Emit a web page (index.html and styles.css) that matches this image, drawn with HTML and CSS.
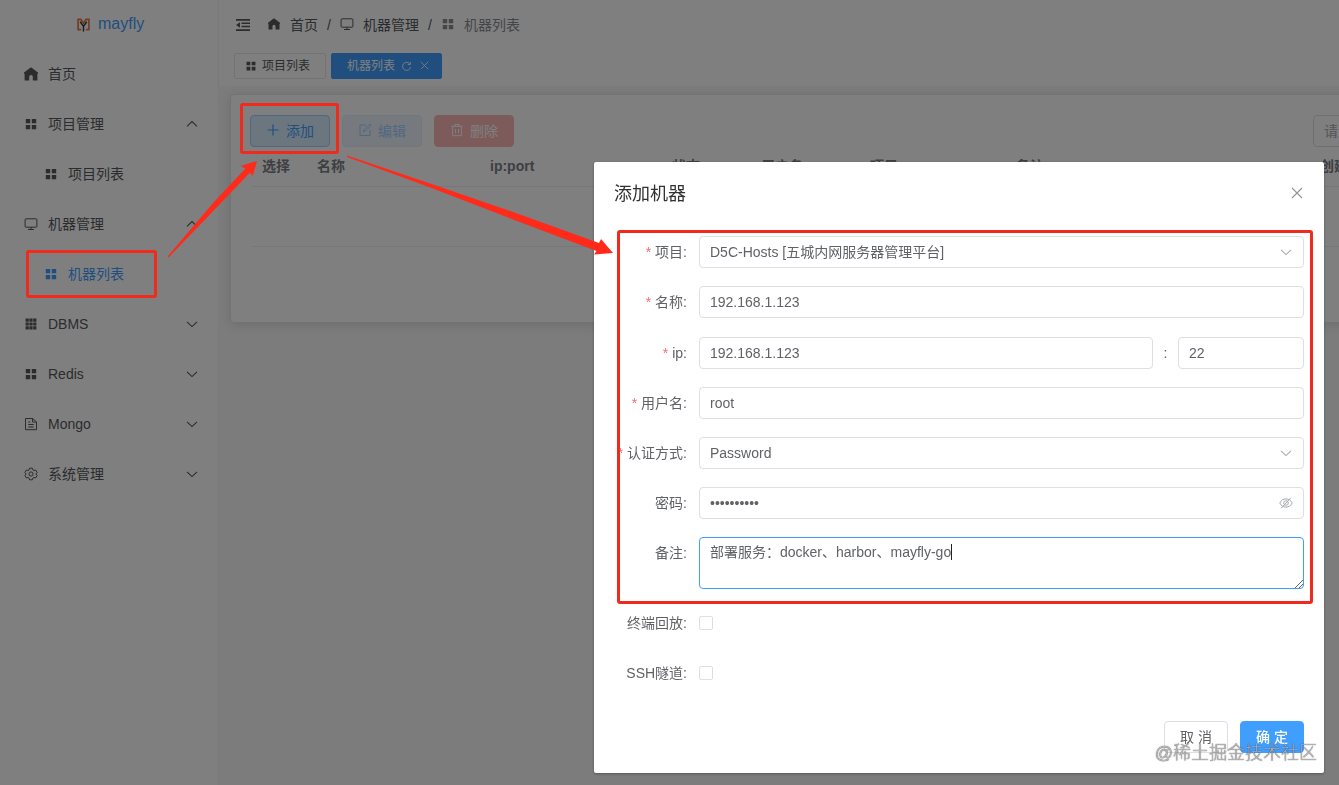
FILE: index.html
```html
<!DOCTYPE html>
<html lang="zh-CN">
<head>
    <meta charset="UTF-8">
    <meta name="viewport" content="width=device-width, initial-scale=1.0">
    <title>mayfly</title>
    <link rel="stylesheet" href="styles.css">
</head>
<body>
    <svg class="sprite">
        <symbol id="i-home" viewBox="0 0 14 14"><path fill="currentColor" d="M7 .3 0 5.600v1.200h.6v6.700h4.600V9.800a1.800 1.800 0 0 1 3.600 0v3.700h4.600V6.800h.6V5.600z"/></symbol>
        <symbol id="i-menu" viewBox="0 0 14 14"><path fill="currentColor" d="M1.800 2h4.400v4.200H1.800zM7.800 2h4.400v4.200H7.800zM1.800 8h4.400v4.200H1.800zM7.800 8h4.400v4.200H7.800z"/></symbol>
        <symbol id="i-grid" viewBox="0 0 14 14"><path fill="currentColor" d="M1.600 1.600h3.200v3.200H1.600zM5.400 1.600h3.200v3.200H5.400zM9.200 1.600h3.200v3.200H9.200zM1.600 5.400h3.200v3.200H1.600zM5.400 5.400h3.200v3.200H5.400zM9.200 5.400h3.200v3.200H9.200zM1.600 9.200h3.200v3.200H1.600zM5.400 9.200h3.200v3.200H5.400zM9.200 9.200h3.200v3.200H9.200z"/></symbol>
        <symbol id="i-monitor" viewBox="0 0 14 14"><path fill="none" stroke="currentColor" d="M2 1.800h10a.9.9 0 0 1 .9.900v6.600a.9.9 0 0 1-.9.900H2a.9.9 0 0 1-.9-.9V2.700A.9.9 0 0 1 2 1.800zM7 10v2M4 12.500h6"/></symbol>
        <symbol id="i-doc" viewBox="0 0 14 14"><path fill="none" stroke="currentColor" d="M1.500 1.500h7.200L12.500 5v7.700h-11zM8.500 1.500V5h4M4.300 5h2M4.300 7.500h5.400M4.300 10h5.400"/></symbol>
        <symbol id="i-gear" viewBox="0 0 14 14"><path fill="none" stroke="currentColor" stroke-linejoin="round" d="M5.600 1.200h2.800l.5 1.700 1.100.6 1.700-.4 1.400 2.300L11.900 7l1.200 1.600-1.400 2.300-1.700-.4-1.100.6-.5 1.700H5.600l-.5-1.700-1.100-.6-1.700.4L.9 8.600 2.100 7 .9 5.400l1.400-2.300 1.700.4 1.100-.6z"/><circle cx="7" cy="7" r="2.100" fill="none" stroke="currentColor"/></symbol>
        <symbol id="i-down" viewBox="0 0 12 12"><path fill="none" stroke="currentColor" stroke-width="1.100" d="M1 3.800l5 4.800 5-4.800"/></symbol>
        <symbol id="i-up" viewBox="0 0 12 12"><path fill="none" stroke="currentColor" stroke-width="1.100" d="M1 8.400l5-4.800 5 4.800"/></symbol>
        <symbol id="i-close" viewBox="0 0 12 12"><path fill="none" stroke="currentColor" stroke-width="1.100" d="M1 1l10 10M11 1L1 11"/></symbol>
        <symbol id="i-refresh" viewBox="0 0 12 12"><path fill="none" stroke="currentColor" d="M9.600 3.200A4.400 4.400 0 1 0 10.400 6.800M10.200 1v2.800H7.400"/></symbol>
        <symbol id="i-plus" viewBox="0 0 14 14"><path fill="none" stroke="currentColor" stroke-width="1.200" d="M7 1.500v11M1.500 7h11"/></symbol>
        <symbol id="i-edit" viewBox="0 0 14 14"><path fill="none" stroke="currentColor" d="M8 2H2v10.500h10V7M5.500 8.800l.5-2L11.800 1l1.300 1.300-5.600 5.900z"/></symbol>
        <symbol id="i-trash" viewBox="0 0 14 14"><path fill="none" stroke="currentColor" d="M1.300 3.300h11.400M4.800 3V1.400h4.400V3M2.600 3.500v9.200h8.800V3.500M5.500 6v4.300M8.500 6v4.300"/></symbol>
        <symbol id="i-hide" viewBox="0 0 14 14"><path fill="none" stroke="currentColor" d="M.8 7C2 4.300 4.300 2.900 7 2.900S12 4.300 13.200 7C12 9.700 9.700 11.100 7 11.100S2 9.700.8 7zM2.300 12.200L11.800 1.800"/><circle cx="7" cy="7" r="2.300" fill="none" stroke="currentColor"/></symbol>
    </svg>

    <div class="layout">
        <aside class="aside">
            <div class="logo">
                <svg class="logo-icon" viewBox="0 0 14 16"><path fill="none" stroke="#e07a42" stroke-width="1.800" d="M4.500 13H1.200V2h3L7 6l2.800-4h3v11H9.500"/><path fill="none" stroke="#333" stroke-width="1.500" d="M3.500 4.500L7 9.500l3.500-5M7 9v6"/></svg>
                <span>mayfly</span>
            </div>
            <ul class="menu">
                <li class="menu-item"><svg class="icon"><use href="#i-home"/></svg>首页</li>
                <li class="menu-item"><svg class="icon"><use href="#i-menu"/></svg>项目管理<svg class="arrow"><use href="#i-up"/></svg></li>
                <li class="menu-item sub"><svg class="icon"><use href="#i-menu"/></svg>项目列表</li>
                <li class="menu-item"><svg class="icon"><use href="#i-monitor"/></svg>机器管理<svg class="arrow"><use href="#i-up"/></svg></li>
                <li class="menu-item sub active"><svg class="icon"><use href="#i-menu"/></svg>机器列表</li>
                <li class="menu-item"><svg class="icon"><use href="#i-grid"/></svg>DBMS<svg class="arrow"><use href="#i-down"/></svg></li>
                <li class="menu-item"><svg class="icon"><use href="#i-menu"/></svg>Redis<svg class="arrow"><use href="#i-down"/></svg></li>
                <li class="menu-item"><svg class="icon"><use href="#i-doc"/></svg>Mongo<svg class="arrow"><use href="#i-down"/></svg></li>
                <li class="menu-item"><svg class="icon"><use href="#i-gear"/></svg>系统管理<svg class="arrow"><use href="#i-down"/></svg></li>
            </ul>
        </aside>

        <div class="content">
            <header class="header">
                <div class="breadcrumb">
                    <svg class="fold" viewBox="0 0 14 12"><path fill="currentColor" d="M0 0h14v1.800H0zM5.500 3.500H14V5H5.500zM5.500 6.800H14v1.500H5.500zM0 10.200h14V12H0zM0 6l4-2.800v5.600z"/></svg>
                    <svg class="icon crumb-icon"><use href="#i-home"/></svg><span>首页</span>
                    <span class="slash">/</span>
                    <svg class="icon crumb-icon"><use href="#i-monitor"/></svg><span>机器管理</span>
                    <span class="slash">/</span>
                    <svg class="icon crumb-icon last"><use href="#i-menu"/></svg><span class="last">机器列表</span>
                </div>
                <div class="tabs">
                    <div class="tab"><svg class="tab-icon"><use href="#i-menu"/></svg>项目列表</div>
                    <div class="tab tab-active">机器列表<svg class="tab-refresh"><use href="#i-refresh"/></svg><svg class="tab-close"><use href="#i-close"/></svg></div>
                </div>
            </header>
            <main class="main">
                <div class="card">
                    <div class="toolbar">
                        <button class="btn btn-add"><svg class="icon"><use href="#i-plus"/></svg>添加</button>
                        <button class="btn btn-edit"><svg class="icon"><use href="#i-edit"/></svg>编辑</button>
                        <button class="btn btn-del"><svg class="icon"><use href="#i-trash"/></svg>删除</button>
                        <div class="search">请选择</div>
                    </div>
                    <div class="table">
                        <div class="table-head">
                            <span>选择</span><span>名称</span><span>ip:port</span><span>状态</span><span>用户名</span><span>项目</span><span>备注</span><span>创建时间</span>
                        </div>
                        <div class="table-empty"></div>
                    </div>
                </div>
            </main>
        </div>
    </div>

    <div class="overlay">
        <div class="dialog">
            <div class="dialog-header">
                <span class="dialog-title">添加机器</span>
                <svg class="dialog-close"><use href="#i-close"/></svg>
            </div>
            <div class="form">
                <div class="form-item">
                    <label class="label required">项目:</label>
                    <div class="input">D5C-Hosts [五城内网服务器管理平台]<svg class="suffix"><use href="#i-down"/></svg></div>
                </div>
                <div class="form-item item-name">
                    <label class="label required">名称:</label>
                    <div class="input">192.168.1.123</div>
                </div>
                <div class="form-item">
                    <label class="label required">ip:</label>
                    <div class="input">192.168.1.123</div>
                    <span class="colon">:</span>
                    <div class="input port">22</div>
                </div>
                <div class="form-item">
                    <label class="label required">用户名:</label>
                    <div class="input">root</div>
                </div>
                <div class="form-item">
                    <label class="label required">认证方式:</label>
                    <div class="input">Password<svg class="suffix"><use href="#i-down"/></svg></div>
                </div>
                <div class="form-item">
                    <label class="label">密码:</label>
                    <div class="input"><span>••••••••••</span><svg class="suffix eye"><use href="#i-hide"/></svg></div>
                </div>
                <div class="form-item">
                    <label class="label">备注:</label>
                    <div class="input textarea">部署服务：docker、harbor、mayfly-go<span class="caret"></span>
                        <svg class="resize" viewBox="0 0 9 9"><path fill="none" stroke="#666" d="M1 9l8-8M5 9l4-4"/></svg>
                    </div>
                </div>
                <div class="form-item">
                    <label class="label">终端回放:</label>
                    <span class="checkbox"></span>
                </div>
                <div class="form-item">
                    <label class="label">SSH隧道:</label>
                    <span class="checkbox"></span>
                </div>
            </div>
            <div class="dialog-footer">
                <button class="btn btn-cancel">取 消</button>
                <button class="btn btn-ok">确 定</button>
            </div>
        </div>
    </div>

    <!-- step marks -->
    <div class="mark mark-menu"></div>
    <div class="mark mark-add"></div>
    <div class="mark mark-form"></div>
    <svg class="arrows" viewBox="0 0 1339 785">
        <path fill="#ff2a1a" d="M167.500 256.500L214 202 245.500 168.500 240.500 166 257 161 252.700 176 250 172.500 219 205 168.500 257.500z"/>
        <path fill="#ff2a1a" d="M347 155.500L430 183.500 520 214.500 599 243 601 239 613 253 594 254.500 596.500 251 517 221 429 187 347 157z"/>
    </svg>
    <div class="watermark">@稀土掘金技术社区</div>
</body>
</html>
```
FILE: styles.css
```css
* {
    box-sizing: border-box;
}
body {
    margin: 0;
    height: 785px;
    overflow: hidden;
    font-family: "Liberation Sans", "Noto Sans CJK SC", sans-serif;
    font-size: 14px;
    line-height: 20px;
    color: #56585c;
}
.sprite {
    display: none;
}
.layout {
    display: flex;
    height: 785px;
}
.icon {
    width: 14px;
    height: 14px;
    flex: none;
}

/* sidebar */
.aside {
    width: 219px;
    flex: none;
    background: #fff;
    border-right: 1px solid #f2f2f2;
}
.logo {
    height: 49px;
    display: flex;
    align-items: center;
    padding: 0 0 1px 77px;
    gap: 8px;
    font-size: 16px;
    color: #409eff;
}
.logo-icon {
    width: 13px;
    height: 16px;
    margin-top: 2px;
}
.menu {
    margin: 0;
    padding: 0;
    list-style: none;
}
.menu-item {
    height: 50px;
    display: flex;
    align-items: center;
    gap: 10px;
    padding: 0 20px 0 24px;
}
.sub {
    padding-left: 44px;
}
.active {
    color: #409eff;
}
.arrow {
    width: 12px;
    height: 12px;
    margin-left: auto;
}

/* header */
.content {
    flex: 1;
    min-width: 0;
    background: #f8f8f8;
}
.header {
    height: 86px;
    background: #fff;
}
.breadcrumb {
    height: 50px;
    display: flex;
    align-items: center;
    padding-left: 17px;
}
.fold {
    width: 14px;
    height: 12px;
    margin-right: 18px;
    margin-bottom: 1px;
}
.crumb-icon {
    margin-right: 9px;
    margin-bottom: 3px;
}
.fold + .crumb-icon {
    width: 12px;
    height: 12px;
    margin-right: 10px;
}
.slash {
    width: 22px;
    text-align: center;
}
.last {
    color: #8a8c91;
}
.tabs {
    display: flex;
    gap: 5px;
    padding: 3px 0 0 15px;
}
.tab {
    display: flex;
    align-items: center;
    height: 26px;
    width: 92px;
    padding-left: 10px;
    font-size: 12px;
    border: 1px solid #e6e6e6;
    border-radius: 2px;
}
.tab-icon {
    width: 12px;
    height: 12px;
    margin-right: 5px;
}
.tab-active {
    width: 111px;
    padding-left: 15px;
    color: #fff;
    background: #409eff;
    border-color: #409eff;
}
.tab-refresh {
    width: 11px;
    height: 11px;
    margin: 0 8px 0 6px;
}
.tab-close {
    width: 9px;
    height: 9px;
    margin-bottom: 2px;
}

/* machine list */
.main {
    padding: 8px 0 30px 11px;
    overflow: hidden;
}
.card {
    width: 1400px;
    height: 229px;
    padding: 20px 19px;
    background: #fff;
    border: 1px solid #e4e7ed;
    border-radius: 4px;
    box-shadow: 0 2px 12px rgba(0, 0, 0, 0.12);
}
.toolbar {
    display: flex;
    gap: 12px;
}
.btn {
    display: flex;
    align-items: center;
    justify-content: center;
    gap: 6px;
    width: 80px;
    height: 32px;
    padding: 0 0 2px;
    font-family: inherit;
    font-size: 14px;
    border: 1px solid;
    border-radius: 4px;
}
.btn-add {
    color: #409eff;
    background: #d9ecff;
    border-color: #a0cfff;
}
.btn-edit {
    color: #a0cfff;
    background: #ecf5ff;
    border-color: #e0effe;
}
.btn-del {
    color: #fff;
    background: #fab6b6;
    border-color: #fab6b6;
}
.search {
    width: 180px;
    height: 32px;
    margin-left: 787px;
    padding: 5px 10px;
    color: #a8abb2;
    border: 1px solid #dcdfe6;
    border-radius: 4px;
}
.table {
    margin-left: 2px;
}
.table-head {
    display: grid;
    grid-template-columns: 55px 173px 182px 89px 109px 146px 304px 200px;
    height: 40px;
    padding: 9px 0 0 10px;
    font-weight: bold;
    color: #7c7f85;
    border-bottom: 1px solid #ebeef5;
}
.table-empty {
    height: 60px;
    border-bottom: 1px solid #ebeef5;
}

/* dialog */
.overlay {
    position: fixed;
    inset: 0;
    background: rgba(0, 0, 0, 0.5);
}
.dialog {
    width: 730px;
    height: 611px;
    margin: 162px 0 0 594px;
    padding: 20px;
    color: #606266;
    background: #fff;
    border-radius: 2px;
    box-shadow: 0 1px 3px rgba(0, 0, 0, 0.3);
}
.dialog-header {
    display: flex;
    align-items: center;
    justify-content: space-between;
    height: 24px;
    margin-bottom: 30px;
    padding-right: 1px;
}
.dialog-title {
    font-size: 18px;
    color: #303133;
}
.dialog-close {
    width: 12px;
    height: 12px;
    margin-bottom: 2px;
    color: #909399;
}
.form-item {
    display: flex;
    align-items: flex-start;
    margin-bottom: 18px;
}
.item-name {
    margin-bottom: 19px;
}
.label {
    display: flex;
    justify-content: flex-end;
    width: 85px;
    flex: none;
    padding-right: 12px;
    line-height: 32px;
    white-space: nowrap;
}
.required::before {
    content: "*";
    margin-right: 4px;
    color: #f56c6c;
}
.input {
    position: relative;
    display: flex;
    align-items: center;
    flex: 1;
    height: 32px;
    padding: 0 11px 0 10px;
    border: 1px solid #dcdfe6;
    border-radius: 4px;
}
.colon {
    width: 25px;
    line-height: 32px;
    text-align: center;
}
.port {
    flex: 0 0 126px;
}
.suffix {
    width: 12px;
    height: 12px;
    margin-left: auto;
    color: #a8abb2;
}
.eye {
    width: 14px;
    height: 14px;
    margin-right: -1px;
}
.textarea {
    align-items: flex-start;
    height: 52px;
    padding-top: 4px;
    border-color: #409eff;
}
.caret {
    width: 1px;
    height: 16px;
    margin-top: 2px;
    background: #222;
}
.resize {
    position: absolute;
    right: 0;
    bottom: 0;
    width: 9px;
    height: 9px;
}
.checkbox {
    width: 14px;
    height: 14px;
    margin-top: 9px;
    border: 1px solid #dcdfe6;
    border-radius: 2px;
}
.dialog-footer {
    display: flex;
    justify-content: flex-end;
    gap: 12px;
    padding-top: 14px;
}
.btn-cancel, .btn-ok {
    width: 64px;
}
.btn-cancel {
    color: #606266;
    background: #fff;
    border-color: #dcdfe6;
}
.btn-ok {
    color: #fff;
    font-weight: 500;
    background: #409eff;
    border-color: #409eff;
}

/* red marks over the page */
.mark {
    position: absolute;
    border: 3px solid #f02a1d;
    border-radius: 3px;
}
.mark-menu {
    left: 26px;
    top: 250px;
    width: 131px;
    height: 48px;
}
.mark-add {
    left: 240px;
    top: 103px;
    width: 99px;
    height: 51px;
}
.mark-form {
    left: 617px;
    top: 230px;
    width: 696px;
    height: 374px;
}
.arrows {
    position: absolute;
    left: 0;
    top: 0;
    width: 1339px;
    height: 785px;
}
.watermark {
    position: absolute;
    right: 22px;
    bottom: 20px;
    font-size: 18px;
    line-height: 24px;
    font-weight: 300;
    color: rgba(215, 215, 215, 0.8);
    text-shadow: 0 0 1px rgba(0, 0, 0, 0.75), 0 0 1px rgba(0, 0, 0, 0.35);
}
```
